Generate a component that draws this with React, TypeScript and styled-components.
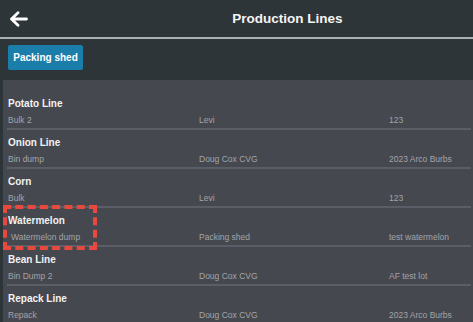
import React from "react";
import styled, { createGlobalStyle } from "styled-components";

const GlobalStyle = createGlobalStyle`
  html, body {
    margin: 0;
    padding: 0;
    background: #2e3538;
    font-family: "Liberation Sans", Arial, sans-serif;
    -webkit-font-smoothing: antialiased;
  }
`;

const Page = styled.div`
  width: 473px;
  height: 322px;
  overflow: hidden;
  background: #2e3538;
  display: flex;
  flex-direction: column;
`;

const Header = styled.header`
  flex-shrink: 0;
  height: 37px;
  display: grid;
  grid-template-columns: 40px 1fr 40px;
  align-items: center;
  border-bottom: 2px solid #a9b1b2;
  box-sizing: content-box;
`;

const BackBtn = styled.button`
  background: none;
  border: none;
  padding: 0 0 0 9px;
  height: 37px;
  display: flex;
  align-items: center;
  color: #fff;
  cursor: pointer;
`;

const Title = styled.h1`
  margin: 0;
  text-align: center;
  color: #f4f4f4;
  font-size: 13.5px;
  font-weight: 700;
  padding-left: 102px;
`;

const Toolbar = styled.div`
  flex-shrink: 0;
  height: 41px;
  display: flex;
  align-items: flex-start;
  padding: 6px 8px 0;
  box-sizing: border-box;
`;

const FilterBtn = styled.button`
  height: 25px;
  width: 75px;
  background: #1b7eaa;
  color: #fff;
  border: none;
  border-radius: 2px;
  font-family: inherit;
  font-size: 10px;
  font-weight: 700;
  padding: 0;
`;

const Panel = styled.div`
  flex: 1;
  min-height: 0;
  overflow: hidden;
  margin-left: 3px;
  background: #46484f;
  padding-top: 11px;
  position: relative;
`;

const Row = styled.div`
  margin: 0 2px 0 4px;
  height: 39px;
  border-bottom: 2px solid #5b5e66;
  box-sizing: border-box;
  display: flex;
  flex-direction: column;
  justify-content: flex-end;
  padding: 0 1px 3px;
`;

const RowTitle = styled.div`
  color: #f2f2f2;
  font-size: 10px;
  font-weight: 700;
  margin-bottom: 6px;
`;

const Cols = styled.div<{ $indent?: number }>`
  display: grid;
  grid-template-columns: 191px 190px 1fr;
  color: #a2a4a9;
  font-size: 8.5px;

  & > span:first-child {
    padding-left: ${p => p.$indent ?? 0}px;
  }
`;

const Highlight = styled.div`
  position: absolute;
  left: 0px;
  top: 125px;
  width: 94px;
  height: 45px;
  box-sizing: border-box;
  border: 4px dashed #e8493f;
  pointer-events: none;
`;

const lines = [
  { name: "Potato Line", a: "Bulk 2", b: "Levi", c: "123" },
  { name: "Onion Line", a: "Bin dump", b: "Doug Cox CVG", c: "2023 Arco Burbs" },
  { name: "Corn", a: "Bulk", b: "Levi", c: "123" },
  { name: "Watermelon", a: "Watermelon dump", b: "Packing shed", c: "test watermelon", indent: 3 },
  { name: "Bean Line", a: "Bin Dump 2", b: "Doug Cox CVG", c: "AF test lot" },
  { name: "Repack Line", a: "Repack", b: "Doug Cox CVG", c: "2023 Arco Burbs" },
];

export default function App() {
  return (
    <Page>
      <GlobalStyle />
      <Header>
        <BackBtn aria-label="Back">
          <svg width="19" height="16" viewBox="0 0 19 16" fill="none">
            <path d="M17.5 8H3M9 1.8L2.5 8 9 14.2" stroke="#fff" strokeWidth="2.8" strokeLinecap="round" strokeLinejoin="round" />
          </svg>
        </BackBtn>
        <Title>Production Lines</Title>
        <span />
      </Header>
      <Toolbar>
        <FilterBtn>Packing shed</FilterBtn>
      </Toolbar>
      <Panel>
        {lines.map(l => (
          <Row key={l.name}>
            <RowTitle>{l.name}</RowTitle>
            <Cols $indent={l.indent}>
              <span>{l.a}</span>
              <span>{l.b}</span>
              <span>{l.c}</span>
            </Cols>
          </Row>
        ))}
        <Highlight />
      </Panel>
    </Page>
  );
}
